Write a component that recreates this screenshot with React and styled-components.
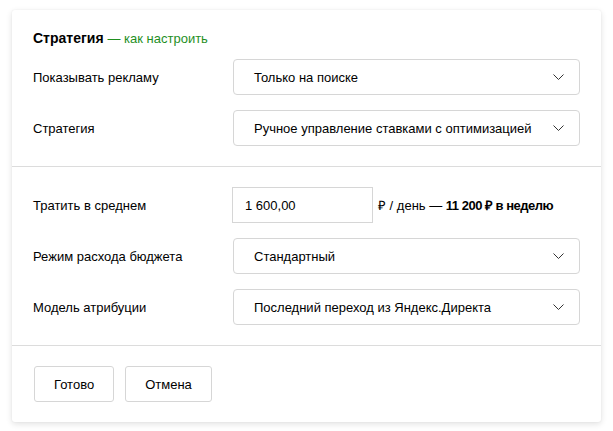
import styled, { createGlobalStyle } from "styled-components";

const GlobalStyle = createGlobalStyle`
  body {
    margin: 0;
    background: #fff;
    font-family: "Liberation Sans", Arial, sans-serif;
    color: #000;
  }
`;

const Chevron = () => (
  <svg width="11" height="6" viewBox="0 0 11 6">
    <polyline points="0.5,0.5 5.5,5.5 10.5,0.5" fill="none" stroke="#333" strokeWidth="1" />
  </svg>
);

const Select = ({ value }) => (
  <SelectBox>
    <span>{value}</span>
    <Chevron />
  </SelectBox>
);

const App = () => {
  return (
    <>
      <GlobalStyle />
      <Page>
        <Card>
          <Section>
            <Title>
              Стратегия <HelpLink>— как настроить</HelpLink>
            </Title>
            <Rows>
              <Row>
                <Label>Показывать рекламу</Label>
                <Select value="Только на поиске" />
              </Row>
              <Row>
                <Label>Стратегия</Label>
                <Select value="Ручное управление ставками с оптимизацией" />
              </Row>
            </Rows>
          </Section>
          <Section>
            <Rows>
              <Row>
                <Label>Тратить в среднем</Label>
                <BudgetGroup>
                  <Input>1 600,00</Input>
                  <Note>
                    ₽ / день — <b>11 200 ₽ в неделю</b>
                  </Note>
                </BudgetGroup>
              </Row>
              <Row>
                <Label>Режим расхода бюджета</Label>
                <Select value="Стандартный" />
              </Row>
              <Row>
                <Label>Модель атрибуции</Label>
                <Select value="Последний переход из Яндекс.Директа" />
              </Row>
            </Rows>
          </Section>
          <Section>
            <Buttons>
              <Button>Готово</Button>
              <Button>Отмена</Button>
            </Buttons>
          </Section>
        </Card>
      </Page>
    </>
  );
};

export default App;

const Page = styled.div`
  padding: 10px 12px;
`;

const Card = styled.div`
  width: 589px;
  background: #fff;
  border-radius: 3px;
  box-shadow: 0 2px 6px rgba(0, 0, 0, 0.12), 0 0 2px rgba(0, 0, 0, 0.06);
`;

const Section = styled.div`
  padding: 20px 21px;
  & + & {
    border-top: 1px solid #dcdcdc;
  }
`;

const Title = styled.div`
  font-size: 14px;
  font-weight: bold;
  line-height: 16px;
  margin-bottom: 12px;
`;

const HelpLink = styled.span`
  font-weight: normal;
  font-size: 13px;
  color: #1f8f1f;
`;

const Rows = styled.div`
  display: flex;
  flex-direction: column;
  gap: 15px;
`;

const Row = styled.div`
  display: grid;
  grid-template-columns: 200px 1fr;
  align-items: center;
  height: 36px;
`;

const Label = styled.div`
  font-size: 13px;
`;

const SelectBox = styled.div`
  display: flex;
  align-items: center;
  justify-content: space-between;
  height: 36px;
  box-sizing: border-box;
  border: 1px solid #d6d6d6;
  border-radius: 4px;
  padding: 0 15px 0 20px;
  font-size: 13px;
`;

const BudgetGroup = styled.div`
  display: flex;
  align-items: center;
  margin-left: -1px;
`;

const Input = styled.div`
  width: 141px;
  height: 36px;
  box-sizing: border-box;
  border: 1px solid #d6d6d6;
  display: flex;
  align-items: center;
  padding-left: 12px;
  font-size: 13px;
`;

const Note = styled.div`
  margin-left: 5px;
  font-size: 13px;
  b {
    font-weight: bold;
    letter-spacing: -0.5px;
  }
`;

const Buttons = styled.div`
  display: flex;
  gap: 11px;
  padding-left: 1px;
`;

const Button = styled.button`
  height: 36px;
  padding: 0 19px;
  background: #fff;
  border: 1px solid #d6d6d6;
  border-radius: 3px;
  font-family: inherit;
  font-size: 13px;
  color: #000;
`;
